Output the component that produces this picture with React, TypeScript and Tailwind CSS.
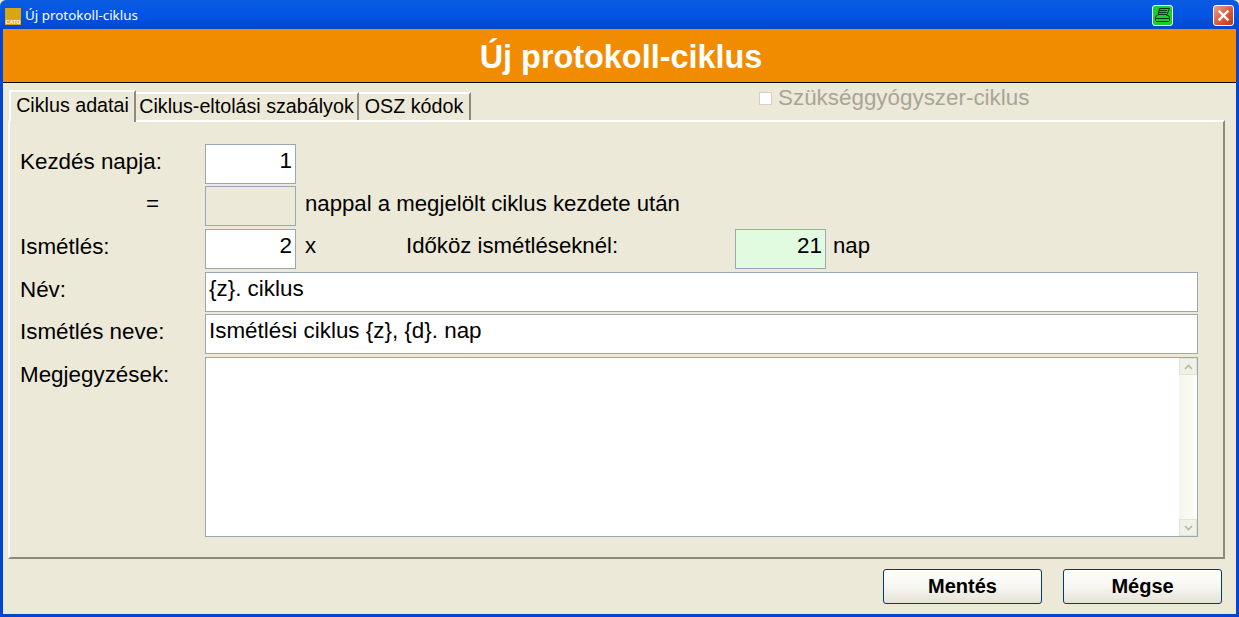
const fieldBase = "h-10 border border-[#9aa7b5] px-[3px] text-[22.4px] leading-[31px] text-black";

function LogoIcon() {
  return (
    <svg width="16" height="17" viewBox="0 0 16 17">
      <rect width="16" height="17" fill="#d9a514" />
      <rect y="11" width="16" height="5" fill="#e0a90f" />
      <text x="8" y="15.5" textAnchor="middle" fontSize="5.5" fontWeight="700" fill="#fff" fontFamily="Liberation Sans, sans-serif">
        CATO
      </text>
    </svg>
  );
}

function PrinterButton() {
  return (
    <div className="flex h-[21px] w-[21px] items-center justify-center rounded-[3px] border border-white bg-[#17d02c]">
      <svg width="17" height="17" viewBox="0 0 17 17" fill="none" stroke="#06320c" strokeWidth="1">
        <path d="M5.5 1.5h10l-2.5 6h-9z" />
        <path d="M5 3.5h8M4.5 5.5h8" />
        <path d="M3.5 8.5h-1l-1 2v3l1 1h12l1-1v-3l-1-2h-2" />
        <path d="M1.5 11.5h14" />
      </svg>
    </div>
  );
}

function CloseButton() {
  return (
    <div className="flex h-[21px] w-[21px] items-center justify-center rounded-[3px] border border-white bg-gradient-to-br from-[#e8a090] via-[#d9603f] to-[#b83a1c]">
      <svg width="13" height="13" viewBox="0 0 13 13" stroke="#fff" strokeWidth="2.4" strokeLinecap="square">
        <path d="M2.5 2.5l8 8M10.5 2.5l-8 8" />
      </svg>
    </div>
  );
}

function Tab({ label, active, width }: { label: string; active?: boolean; width: string }) {
  if (active) {
    return (
      <div
        className={`relative z-10 -mb-[2px] flex h-[32px] items-center justify-center border-t-2 border-r-2 border-l-2 border-t-white border-r-[#8f8a7c] border-l-white bg-[#ece9d8] pb-[3px] text-[19.7px] text-black ${width}`}
      >
        {label}
      </div>
    );
  }
  return (
    <div
      className={`flex h-[28px] items-center justify-center border-t-2 border-r-2 border-t-white border-r-[#8f8a7c] text-[19.7px] text-black ${width}`}
    >
      {label}
    </div>
  );
}

function Row({ label, height, children }: { label: React.ReactNode; height: string; children: React.ReactNode }) {
  return (
    <div className={`flex items-start ${height}`}>
      <div className="w-[195px] shrink-0 pl-[10px] text-[22.4px] leading-[36px] text-black">{label}</div>
      {children}
    </div>
  );
}

function ScrollBar() {
  return (
    <div className="flex w-[18px] flex-col justify-between bg-gradient-to-r from-[#f6f5ea] to-[#fdfdfa]">
      <div className="flex h-[17px] items-center justify-center border border-[#dfe3da] bg-[#f2f1e6]">
        <svg width="9" height="6" viewBox="0 0 9 6" fill="none" stroke="#b5b8ac" strokeWidth="1.6">
          <path d="M1 5l3.5-3.5L8 5" />
        </svg>
      </div>
      <div className="flex h-[17px] items-center justify-center border border-[#dfe3da] bg-[#f2f1e6]">
        <svg width="9" height="6" viewBox="0 0 9 6" fill="none" stroke="#b5b8ac" strokeWidth="1.6">
          <path d="M1 1l3.5 3.5L8 1" />
        </svg>
      </div>
    </div>
  );
}

function DialogButton({ label }: { label: string }) {
  return (
    <button className="h-[35px] w-[159px] rounded-[3px] border border-[#003c74] bg-gradient-to-b from-white via-[#f7f6f1] to-[#e4e2d8] pb-[2px] text-[20px] font-bold text-black">
      {label}
    </button>
  );
}

export default function App() {
  return (
    <div className="flex h-[617px] w-[1239px] flex-col overflow-hidden bg-[#ece9d8] font-['Liberation_Sans',Arial,sans-serif]">
      {/* title bar */}
      <div className="flex h-[29px] shrink-0 items-center rounded-t-[6px] bg-[#0a55dd] bg-gradient-to-b from-[#0a5be0] via-[#0255e5] to-[#0447c9] pr-[5px] pl-[5px]">
        <div className="mt-[3px]">
          <LogoIcon />
        </div>
        <span className="mt-[2px] ml-[4px] font-['Noto_Sans',sans-serif] text-[13.4px] text-white">Új protokoll-ciklus</span>
        <div className="mt-[2px] ml-auto flex items-center gap-[40px]">
          <PrinterButton />
          <CloseButton />
        </div>
      </div>

      <div className="flex min-h-0 flex-1 flex-col border-x-[3px] border-b-[3px] border-[#0345d0]">
        {/* orange header */}
        <div className="flex h-[54px] shrink-0 items-center justify-center border-b border-black bg-[#f18b00] pt-[3px] pl-[3px] text-[32.4px] font-bold text-white">
          Új protokoll-ciklus
        </div>

        {/* tabs */}
        <div className="flex h-[37px] shrink-0 items-end pl-[6px]">
          <Tab label="Ciklus adatai" active width="w-[127px]" />
          <Tab label="Ciklus-eltolási szabályok" width="w-[223px]" />
          <Tab label="OSZ kódok" width="w-[112px]" />
          <div className="mb-[9px] ml-[288px] flex items-center gap-[6px] text-[22.4px] leading-[26px] text-[#a8a598]">
            <span className="h-[13px] w-[13px] border border-[#d5d2c4] bg-white" />
            Szükséggyógyszer-ciklus
          </div>
        </div>

        {/* panel */}
        <div className="ml-[5px] flex h-[439px] w-[1217px] shrink-0 flex-col border-t-2 border-r-2 border-b-2 border-l-2 border-t-white border-r-[#8f8a7c] border-b-[#8f8a7c] border-l-white pt-[22px]">
          <Row label="Kezdés napja:" height="h-[42px]">
            <div className={`${fieldBase} w-[91px] bg-white text-right`}>1</div>
          </Row>
          <Row label={<span className="block pr-[46px] text-right">=</span>} height="h-[43px]">
            <div className="h-10 w-[91px] border border-[#9aa7b5] bg-[#ece9d8]" />
            <span className="ml-[9px] text-[22.2px] leading-[36px] text-black">nappal a megjelölt ciklus kezdete után</span>
          </Row>
          <Row label="Ismétlés:" height="h-[43px]">
            <div className={`${fieldBase} w-[91px] bg-white text-right`}>2</div>
            <span className="ml-[9px] w-[101px] text-[22.2px] leading-[33px] text-black">x</span>
            <span className="w-[329px] text-[22.2px] leading-[34px] text-black">Időköz ismétléseknél:</span>
            <div className={`${fieldBase} w-[91px] border-[#8fa08f] bg-[#e0fbe0] text-right`}>21</div>
            <span className="ml-[7px] text-[22.2px] leading-[33px] text-black">nap</span>
          </Row>
          <Row label="Név:" height="h-[42px]">
            <div className={`${fieldBase} w-[993px] bg-white`}>{"{z}. ciklus"}</div>
          </Row>
          <Row label="Ismétlés neve:" height="h-[43px]">
            <div className={`${fieldBase} w-[993px] bg-white`}>{"Ismétlési ciklus {z}, {d}. nap"}</div>
          </Row>
          <Row label="Megjegyzések:" height="h-[180px]">
            <div className="flex h-[180px] w-[993px] justify-end border border-[#9aa7b5] bg-white">
              <ScrollBar />
            </div>
          </Row>
        </div>

        {/* buttons */}
        <div className="flex flex-1 items-start justify-end gap-[21px] pt-[10px] pr-[14px]">
          <DialogButton label="Mentés" />
          <DialogButton label="Mégse" />
        </div>
      </div>
    </div>
  );
}
